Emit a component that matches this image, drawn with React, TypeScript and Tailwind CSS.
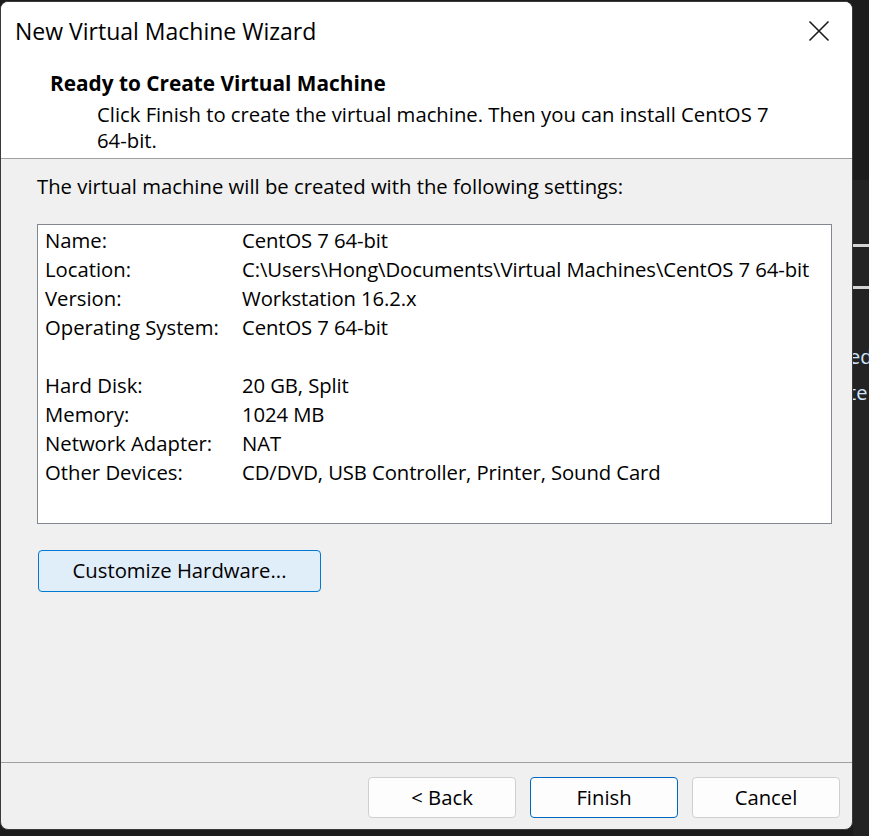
import React from "react";

const rows: [string, string][] = [
  ["Name:", "CentOS 7 64-bit"],
  ["Location:", "C:\\Users\\Hong\\Documents\\Virtual Machines\\CentOS 7 64-bit"],
  ["Version:", "Workstation 16.2.x"],
  ["Operating System:", "CentOS 7 64-bit"],
  ["", ""],
  ["Hard Disk:", "20 GB, Split"],
  ["Memory:", "1024 MB"],
  ["Network Adapter:", "NAT"],
  ["Other Devices:", "CD/DVD, USB Controller, Printer, Sound Card"],
];

export default function App() {
  return (
    <div
      className="flex w-[869px] h-[836px] overflow-hidden bg-[#1c1c1c] pt-[1px] text-black"
      style={{ fontFamily: '"Open Sans", "Noto Sans", sans-serif' }}
    >
      <div className="flex flex-col w-[853px] h-[829px] shrink-0 rounded-[8px] border border-[#3a3a3a] bg-[#f0f0f0] overflow-hidden">
        {/* header */}
        <div className="bg-white border-b border-[#a0a0a0] h-[157px] shrink-0">
          <div className="flex items-center justify-between h-[57px] pl-[14px] pr-[20px]">
            <span className="text-[23px] leading-[28px]">New Virtual Machine Wizard</span>
            <svg width="22" height="22" viewBox="0 0 22 22" className="mr-[2px]">
              <path d="M1.5 1.5 L20.5 20.5 M20.5 1.5 L1.5 20.5" stroke="#1a1a1a" strokeWidth="1.6" fill="none" />
            </svg>
          </div>
          <div className="pl-[49px] pt-[11px] text-[20.8px] leading-[26px] font-bold">Ready to Create Virtual Machine</div>
          <div className="pl-[96px] pt-[5px] text-[20.3px] leading-[26px] whitespace-nowrap">
            Click Finish to create the virtual machine. Then you can install CentOS 7
            <br />
            64-bit.
          </div>
        </div>
        {/* body */}
        <div className="flex-1 px-[36px] pt-[14px]">
          <div className="text-[20.3px] leading-[26px]">The virtual machine will be created with the following settings:</div>
          <div className="mt-[25px] w-[795px] h-[300px] border border-[#828790] bg-white pl-[7px] pt-[1px]">
            {rows.map(([k, v], i) => (
              <div key={i} className="flex h-[29px] items-center text-[20.3px] leading-[29px] whitespace-nowrap">
                <span className="w-[197px] shrink-0">{k}</span>
                <span className="tracking-[-0.1px]">{v}</span>
              </div>
            ))}
          </div>
          <button className="mt-[26px] ml-[1px] w-[283px] h-[42px] rounded-[4px] border border-[#0078d4] bg-[#e0eef9] text-[20.3px] leading-[26px] pb-[2px]">
            Customize Hardware...
          </button>
        </div>
        {/* footer */}
        <div className="border-t border-[#a0a0a0] h-[67px] shrink-0 flex justify-end gap-[14px] pr-[12px] pt-[14px]">
          <button className="w-[148px] h-[41px] rounded-[4px] border border-[#d0d0d0] bg-[#fdfdfd] text-[20.3px]">&lt; Back</button>
          <button className="w-[148px] h-[41px] rounded-[4px] border border-[#0067c0] bg-[#fdfdfd] text-[20.3px]">Finish</button>
          <button className="w-[148px] h-[41px] rounded-[4px] border border-[#d0d0d0] bg-[#fdfdfd] text-[20.3px]">Cancel</button>
        </div>
      </div>
      {/* background strip */}
      <div className="flex-1 flex flex-col overflow-hidden -mt-[1px]">
        <div className="h-[180px] bg-[#1c1c1c] shrink-0" />
        <div className="flex-1 bg-[#232323] flex flex-col">
          <div className="h-[64px]" />
          <div className="h-[3px] bg-[#d4d4d4]" />
          <div className="h-[39px]" />
          <div className="h-[3px] bg-[#d4d4d4]" />
          <div className="h-[50px]" />
          <div className="-ml-[4px] text-[20px] leading-[36px] text-[#cfe4ff] whitespace-nowrap">ed</div>
          <div className="-ml-[4px] text-[20px] leading-[36px] text-[#cfe4ff] whitespace-nowrap">te</div>
        </div>
      </div>
    </div>
  );
}
